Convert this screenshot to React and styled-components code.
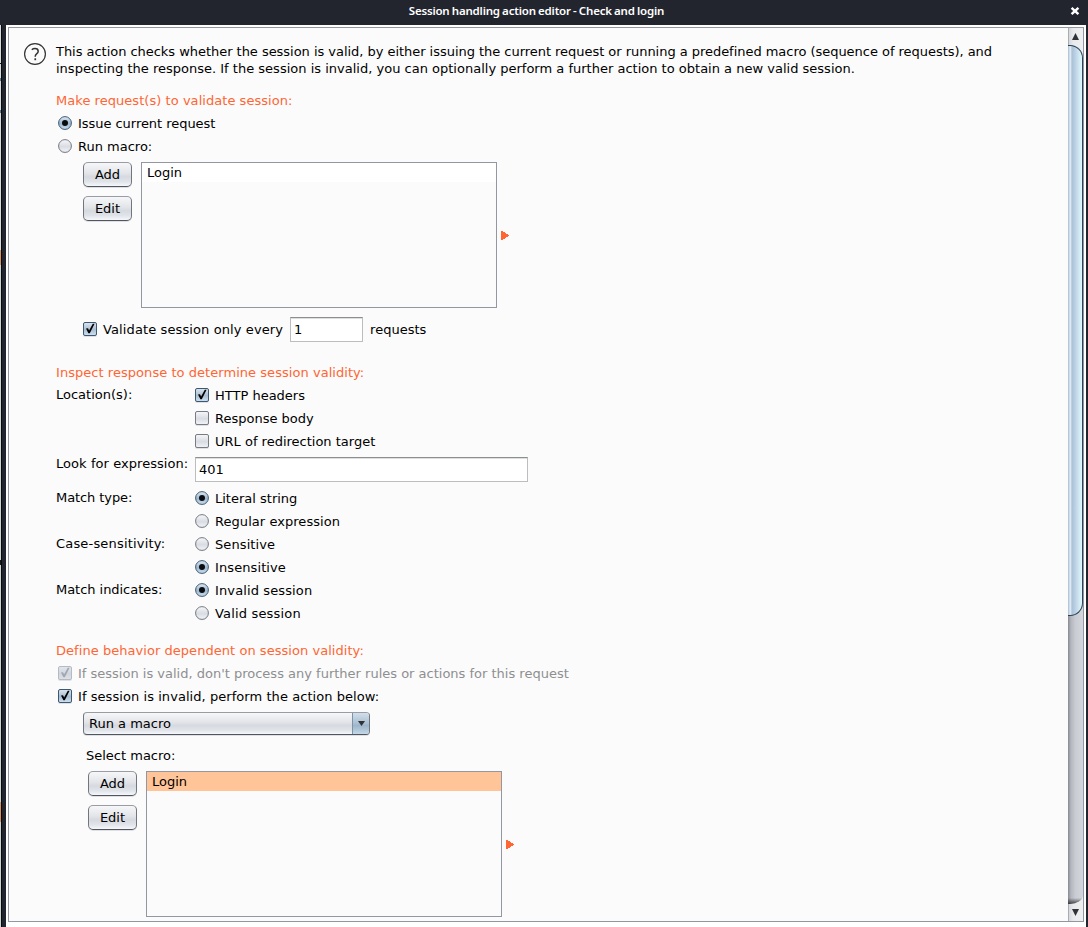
import React from 'react';
import styled, { createGlobalStyle, css } from 'styled-components';

const Global = createGlobalStyle`
  * { box-sizing: border-box; }
  html, body { margin: 0; padding: 0; background: #23252e; overflow: hidden; }
`;

const Desktop = styled.div`
  display: flex;
  flex-direction: column;
  width: 1088px;
  height: 927px;
  background: #23252e;
  font: 13px/17px "DejaVu Sans", sans-serif;
  color: #000;
`;

const TitleBar = styled.header`
  display: flex;
  align-items: center;
  flex: none;
  height: 25px;
  padding: 0 8px 4px 0;
  color: #fff;
`;

const Title = styled.h1`
  flex: 1;
  margin: 0;
  padding: 0 0 1px 3px;
  text-align: center;
  font: 600 11.5px/19px "Noto Sans", sans-serif;
  letter-spacing: -0.2px;
  word-spacing: -0.5px;
`;

const Main = styled.div`
  display: flex;
  flex: 1;
  min-height: 0;
`;

const Backdrop = styled.div`
  flex: none;
  width: 2px;
  margin-right: 4px;
  border-right: 1px solid #090a0d;
  background: linear-gradient(
    #d5dadc 0 38px, #16181c 38px 39px, #d5dadc 39px 53px, #5d7c95 53px 56px, #d5dadc 56px 85px,
    #5d7c95 85px 88px, #d5dadc 88px 225px, #d8935a 225px 240px,
    #c9d1d2 240px 535px, #16181c 535px 540px, #c9d1d2 540px 777px, #d8935a 777px 797px, #c9d1d2 797px
  );
`;

const Window = styled.div`
  flex: none;
  width: 1080px;
  height: 902px;
  padding: 2px;
  background: #fff;
`;

const ScrollPane = styled.div`
  display: flex;
  width: 1076px;
  height: 895px;
  border: 1px solid #9297a1;
  background: #fbfbfb;
`;

const Content = styled.main`
  flex: 1;
  padding: 15px 0 0 15px;
  overflow: hidden;
`;

const Intro = styled.div`
  display: flex;
  gap: 9px;
`;

const IntroText = styled.p`
  margin: 0;
  white-space: pre;
`;

const Tracked = styled.span`
  letter-spacing: ${p => p.$spacing || 0}px;
`;

const Section = styled.section`
  padding-left: 32px;
  margin-top: ${p => p.$top}px;
`;

const Heading = styled.h2`
  margin: 0 0 3px;
  font: inherit;
  letter-spacing: 0.045px;
  color: #ff6633;
`;

const OptionRow = styled.label`
  display: flex;
  align-items: center;
  height: 23px;
  gap: 6px;
  padding-left: ${p => p.$indent || 0}px;
  white-space: pre;
  color: ${p => (p.$disabled ? '#8e8f91' : '#000')};
`;

const Icon = styled.svg`
  display: block;
  flex: none;
`;

const MacroPicker = styled.div`
  display: flex;
  align-items: flex-start;
  padding: ${p => p.$top || 0}px 0 0 ${p => p.$indent}px;
`;

const ButtonColumn = styled.div`
  display: flex;
  flex-direction: column;
  gap: 9px;
  margin-right: 9px;
`;

const raised = css`
  border: 1px solid #70757e;
  border-top-color: #989ca4;
  border-bottom-color: #50565f;
  background: linear-gradient(#f7f7f9, #e2e4e8 45%, #d6d9df 60%, #e1e4e9 82%, #f6f8fb);
  box-shadow: 0 1px 0 #dfe0e3;
`;

const Button = styled.button`
  ${raised}
  width: 49px;
  height: 25px;
  margin: 0;
  padding: 0 0 1px;
  font: inherit;
  color: #000;
  border-radius: 5px;
`;

const List = styled.div`
  width: 356px;
  height: 146px;
  border: 1px solid #9297a1;
`;

const ListItem = styled.div`
  height: 19px;
  padding: 1px 5px;
  background: ${p => (p.$selected ? '#ffc497' : '#fff')};
`;

const Pointer = styled(Icon)`
  margin: 69px 0 0 4px;
`;

const TextField = styled.input`
  width: ${p => p.$width}px;
  height: 25px;
  margin-top: ${p => p.$top || 0}px;
  padding: 0 3px;
  border: 1px solid #bcbdbf;
  border-top-color: #8d8e90;
  border-radius: 0;
  outline: none;
  background: #fff;
  box-shadow: inset 0 1px 0 #dedfe0;
  font: inherit;
  color: #000;
`;

const ValidateRow = styled.div`
  display: flex;
  align-items: center;
  gap: 7px;
  height: 25px;
  margin: 9px 0 0 27px;
`;

const FieldGroup = styled.div`
  display: grid;
  grid-template-columns: 139px 1fr;
  height: ${p => p.$height}px;
`;

const FieldLabel = styled.div`
  padding-top: 2px;
  white-space: nowrap;
  letter-spacing: ${p => p.$spacing || 0}px;
`;

const Combo = styled.div`
  ${raised}
  display: flex;
  width: 287px;
  height: 23px;
  margin: 4px 0 12px 27px;
  border-radius: 4px;
  overflow: hidden;
`;

const ComboValue = styled.div`
  flex: 1;
  padding: 2px 5px;
`;

const ComboArrow = styled.div`
  display: flex;
  align-items: center;
  justify-content: center;
  width: 17px;
  border-left: 1px solid #7d93a7;
  background: linear-gradient(#d2dfea, #a9bfd2 50%, #9db6ca 60%, #c3d8e8);
`;

const SelectLabel = styled.div`
  margin: 0 0 7px 30px;
`;

const ScrollBar = styled.div`
  display: flex;
  flex-direction: column;
  flex: none;
  width: 15px;
  background: linear-gradient(90deg, #a9adb3 0 1px, #d6d8dc 1px, #e8eaec 35%, #eef0f1);
`;

const ScrollButton = styled.div`
  display: flex;
  align-items: center;
  justify-content: center;
  flex: none;
  height: 17px;
`;

const Track = styled.div`
  flex: 1;
  border-radius: 0 13px 13px 0 / 0 13px 9px 0;
  background:
    linear-gradient(transparent calc(100% - 6px), rgba(40, 41, 45, 0.85)) no-repeat,
    linear-gradient(90deg, #888b91, #b4b7bd 20%, #c9ccd2 50%, #d3d6dc);
`;

const Thumb = styled.div`
  height: 571px;
  border: 1px solid #2c4358;
  border-left: 0;
  border-radius: 0 13px 13px 0;
  background: linear-gradient(90deg, #a7b9cc 0, #dce8f3 14%, #dfe9f2 20%, #a9c0d6 28%, #c2d8e8 60%, #e0fafd);
`;

function Radio({ checked }) {
  const id = checked ? 'radioOn' : 'radioOff';
  return (
    <Icon width="14" height="15" viewBox="0 0 14 15">
      <defs>
        <linearGradient id={id} x2="0" y2="1">
          <stop offset="0" stopColor={checked ? '#dce8f3' : '#f6f7f9'} />
          <stop offset=".55" stopColor={checked ? '#9fb7cc' : '#d9dce2'} />
          <stop offset="1" stopColor={checked ? '#cce0f1' : '#f3f5f8'} />
        </linearGradient>
      </defs>
      <circle cx="7" cy="7.6" r="6.7" fill="#dcdee1" />
      <circle cx="7" cy="7" r="6.4" fill={`url(#${id})`} stroke={checked ? '#435d75' : '#777b84'} />
      {checked && <circle cx="7" cy="7" r="3" fill="#090d12" />}
    </Icon>
  );
}

function Check({ checked, disabled }) {
  const id = disabled ? 'checkDim' : checked ? 'checkOn' : 'checkOff';
  const tones = disabled
    ? ['#e2e6ed', '#d2d7df', '#dce2ea']
    : checked
      ? ['#dbe6f2', '#a9bed1', '#cfe3f4']
      : ['#f7f7f9', '#d9dce2', '#f2f4f8'];
  const edge = disabled ? '#b5bac3' : checked ? '#3e5870' : '#777b84';
  return (
    <Icon width="14" height="15" viewBox="0 0 14 15">
      <defs>
        <linearGradient id={id} x2="0" y2="1">
          <stop offset="0" stopColor={tones[0]} />
          <stop offset=".55" stopColor={tones[1]} />
          <stop offset="1" stopColor={tones[2]} />
        </linearGradient>
      </defs>
      <rect x="0" y="1" width="14" height="14" rx="2" fill="#dfe1e4" />
      <rect x=".5" y=".5" width="13" height="13" rx="1.5" fill={`url(#${id})`} stroke={edge} />
      {checked && (
        <path d="M3 6.6 L5 6.2 L6.1 8.4 L9.8 1.8 L11.6 1.8 L6.8 11.2 L5.4 11.2 Z" fill={disabled ? '#a1a6af' : '#000'} />
      )}
    </Icon>
  );
}

function Option({ type, checked, disabled, indent, spacing, children }) {
  return (
    <OptionRow $indent={indent} $disabled={disabled}>
      {type === 'radio' ? <Radio checked={checked} /> : <Check checked={checked} disabled={disabled} />}
      <Tracked $spacing={spacing}>{children}</Tracked>
    </OptionRow>
  );
}

function Picker({ indent, top, selected }) {
  return (
    <MacroPicker $indent={indent} $top={top}>
      <ButtonColumn>
        <Button>Add</Button>
        <Button>Edit</Button>
      </ButtonColumn>
      <List><ListItem $selected={selected}>Login</ListItem></List>
      <Pointer width="8" height="9" viewBox="0 0 8 9" shapeRendering="crispEdges">
        <path d="M0 0H2V1H4V2H5V3H7V4H8V5H7V6H5V7H4V8H2V9H0Z" fill="#ff6633" />
      </Pointer>
    </MacroPicker>
  );
}

function Arrow({ up, width = 7, height = 7 }) {
  return (
    <Icon width={width} height={height} viewBox="0 0 8 8" preserveAspectRatio="none">
      <path d={up ? 'M4 0L8 8H0Z' : 'M0 0H8L4 8Z'} fill="#303236" />
    </Icon>
  );
}

export default function App() {
  return (
    <Desktop>
      <Global />
      <TitleBar>
        <Title>Session handling action editor - Check and login</Title>
        <Icon width="10" height="10" viewBox="0 0 10 10">
          <path d="M1.6 1.8L8.4 8.2M8.4 1.8L1.6 8.2" stroke="#fff" strokeWidth="2.5" />
        </Icon>
      </TitleBar>
      <Main>
        <Backdrop />
        <Window>
          <ScrollPane>
            <Content>
              <Intro>
                <Icon width="23" height="23" viewBox="0 0 23 23">
                  <circle cx="11" cy="11" r="10.4" fill="none" stroke="#333" strokeWidth="1.2" />
                  <path d="M7.8 6.7Q9 5.6 11 5.6Q14.2 5.6 14.2 8.2Q14.2 9.6 12.6 10.8Q11.2 11.9 11.2 13.7" fill="none" stroke="#333" strokeWidth="1.5" />
                  <rect x="10.4" y="15.3" width="1.7" height="1.9" fill="#333" />
                </Icon>
                <IntroText>
                  <Tracked $spacing={-0.034}>
                    {'This action checks whether the session is valid, by either issuing the current request or running a predefined macro (sequence of requests), and\n'}
                  </Tracked>
                  <Tracked $spacing={0.006}>
                    {'inspecting the response. If the session is invalid, you can optionally perform a further action to obtain a new valid session.'}
                  </Tracked>
                </IntroText>
              </Intro>

              <Section $top={15}>
                <Heading>Make request(s) to validate session:</Heading>
                <Option type="radio" checked indent={2} spacing={-0.04}>Issue current request</Option>
                <Option type="radio" indent={2}>Run macro:</Option>
                <Picker indent={27} top={4} />
                <ValidateRow>
                  <Option checked spacing={0.11}>Validate session only every</Option>
                  <TextField $width={73} defaultValue="1" />
                  <span>requests</span>
                </ValidateRow>
              </Section>

              <Section $top={22}>
                <Heading>Inspect response to determine session validity:</Heading>
                <FieldGroup $height={69}>
                  <FieldLabel>Location(s):</FieldLabel>
                  <div>
                    <Option checked>HTTP headers</Option>
                    <Option>Response body</Option>
                    <Option>URL of redirection target</Option>
                  </div>
                </FieldGroup>
                <FieldGroup $height={34}>
                  <FieldLabel $spacing={0.06}>Look for expression:</FieldLabel>
                  <div><TextField $width={333} $top={4} defaultValue="401" /></div>
                </FieldGroup>
                <FieldGroup $height={46}>
                  <FieldLabel $spacing={-0.08}>Match type:</FieldLabel>
                  <div>
                    <Option type="radio" checked>Literal string</Option>
                    <Option type="radio" spacing={0.05}>Regular expression</Option>
                  </div>
                </FieldGroup>
                <FieldGroup $height={46}>
                  <FieldLabel $spacing={0.18}>Case-sensitivity:</FieldLabel>
                  <div>
                    <Option type="radio" spacing={0.1}>Sensitive</Option>
                    <Option type="radio" checked spacing={0.1}>Insensitive</Option>
                  </div>
                </FieldGroup>
                <FieldGroup $height={46}>
                  <FieldLabel $spacing={-0.04}>Match indicates:</FieldLabel>
                  <div>
                    <Option type="radio" checked spacing={0.12}>Invalid session</Option>
                    <Option type="radio" spacing={0.17}>Valid session</Option>
                  </div>
                </FieldGroup>
              </Section>

              <Section $top={17}>
                <Heading>Define behavior dependent on session validity:</Heading>
                <Option checked disabled indent={2}>If session is valid, don't process any further rules or actions for this request</Option>
                <Option checked indent={2} spacing={0.06}>If session is invalid, perform the action below:</Option>
                <Combo>
                  <ComboValue>Run a macro</ComboValue>
                  <ComboArrow><Arrow height={5} /></ComboArrow>
                </Combo>
                <SelectLabel>Select macro:</SelectLabel>
                <Picker indent={32} selected />
              </Section>
            </Content>
            <ScrollBar>
              <ScrollButton><Arrow up /></ScrollButton>
              <Track><Thumb /></Track>
              <ScrollButton><Arrow /></ScrollButton>
            </ScrollBar>
          </ScrollPane>
        </Window>
      </Main>
    </Desktop>
  );
}
